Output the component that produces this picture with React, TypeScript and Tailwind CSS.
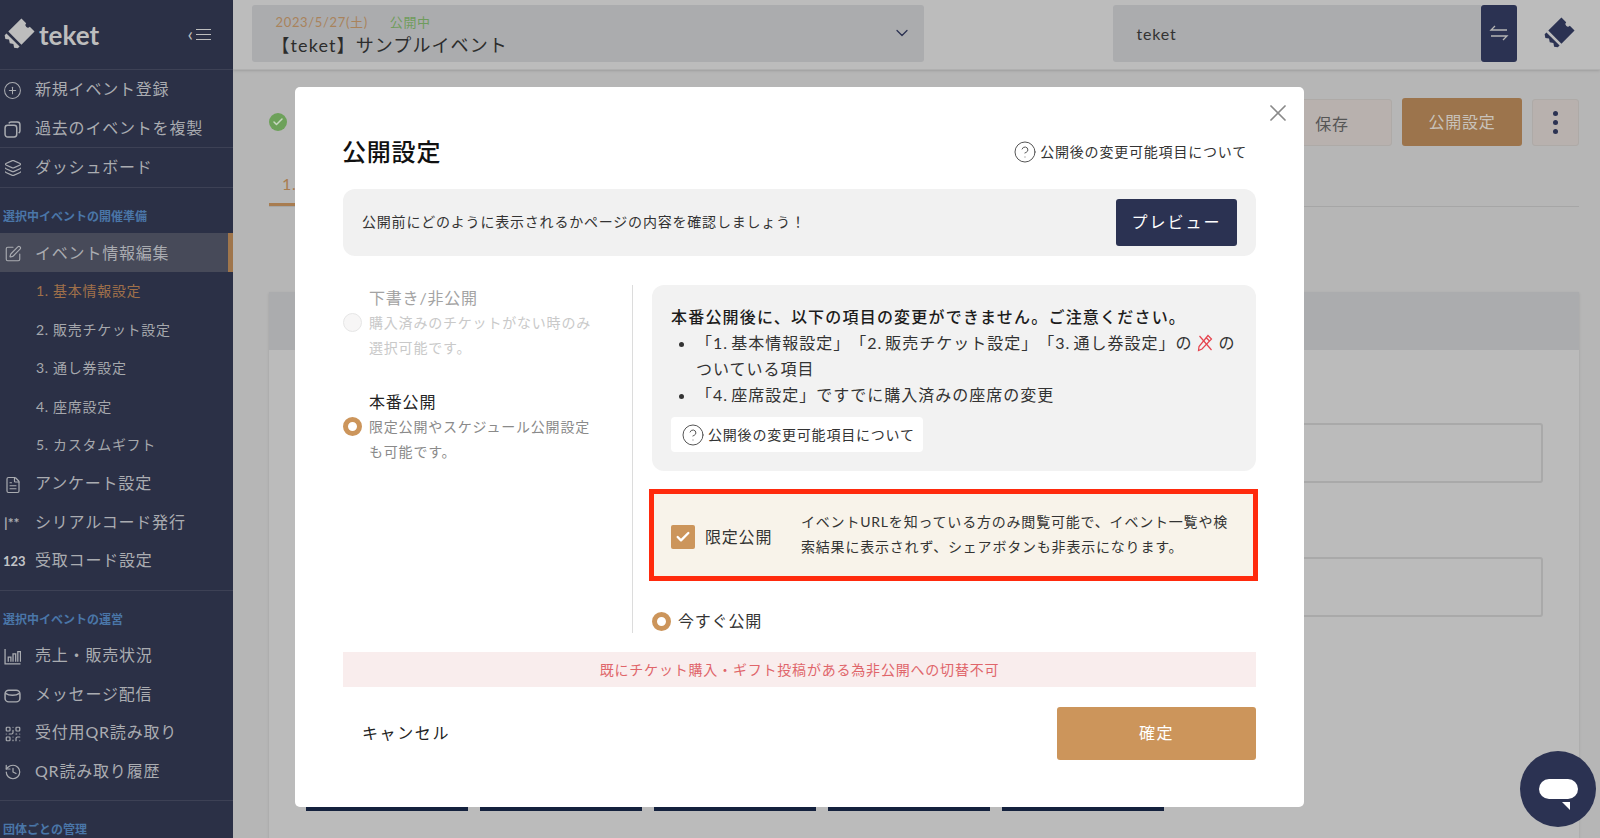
import React from 'react'
import { ChevronDown, CirclePlus, Layers, SquarePen, FileText, QrCode, History, X, Check, CircleHelp } from 'lucide-react'

const TicketLogo = ({ className }: { className?: string }) => (
  <svg viewBox="-16 -16 32 32" className={className} fill="currentColor">
    <g transform="rotate(-45)">
      <path d="M-5 -9H13V-2.500A2.500 2.500 0 0 0 13 2.500V9H-5Z" />
      <path d="M-7.500 -9V9H-10L-12 6L-10 3L-12 0L-10 -3L-12 -6L-10 -9Z" />
    </g>
  </svg>
)

const CopyIcon = () => (
  <svg viewBox="0 0 16 16" className="w-[17px] h-[17px]" fill="none" stroke="currentColor" strokeWidth="1.4">
    <rect x="1" y="4" width="11" height="11" rx="2.500" />
    <path d="M4.500 2.200C5 1.400 5.600 1 6.500 1H12.500C14 1 15 2 15 3.500V9.500C15 10.400 14.600 11 13.800 11.500" />
  </svg>
)

const MailIcon = () => (
  <svg viewBox="0 0 16 16" className="w-[17px] h-[17px]" fill="none" stroke="currentColor" strokeWidth="1.4">
    <rect x="1" y="3" width="14" height="11" rx="3.500" />
    <path d="M1.500 6C5 8.500 11 8.500 14.500 6" />
  </svg>
)

const BarsIcon = () => (
  <svg viewBox="0 0 16 16" className="w-[17px] h-[17px]" fill="none" stroke="currentColor" strokeWidth="1.200">
    <path d="M1 1V15H15.500" />
    <path d="M4 13V8.500H6.500V13" />
    <path d="M8.500 13V5.500H11V13" />
    <path d="M13 13V3.500H15.500V13" />
  </svg>
)

const SwapIcon = () => (
  <svg viewBox="0 0 20 20" className="w-5 h-5" fill="none" stroke="currentColor" strokeWidth="1.300">
    <path d="M18 7H2L6 3" />
    <path d="M2 13H18L14 17" />
  </svg>
)

const NoEditIcon = () => (
  <svg viewBox="0 0 16 18" className="inline-block w-[16px] h-[18px] mx-[5px] align-[-3px] text-[#e5434d]" fill="none" stroke="currentColor" strokeWidth="1.200">
    <path d="M11 1.500L14.500 5L5 15L1.500 16.500L2 12.500Z" />
    <path d="M2.500 2L14.500 16" />
    <path d="M9 3.500L12.500 7" />
  </svg>
)

const Radio = ({ on }: { on?: boolean }) => (
  <span className={on
    ? 'shrink-0 w-[19px] h-[19px] rounded-full border-[5px] border-[#cc955b] bg-white'
    : 'shrink-0 w-[19px] h-[19px] rounded-full border border-[#e6e6e6] bg-[#f7f6f6]'} />
)

const NavItem = ({ icon, label }: { icon: React.ReactNode; label: string }) => (
  <div className="h-[38.4px] flex items-center text-[#aaacb1] text-base tracking-wider">
    <span className="w-[35px] pl-[4px] pt-[3px] flex items-center shrink-0">{icon}</span>
    <span>{label}</span>
  </div>
)

const SectionLabel = ({ label }: { label: string }) => (
  <div className="h-[45px] flex items-end pb-[8px] pl-[3px] text-xs font-bold text-[#4a76a8]">{label}</div>
)

const Sidebar = () => (
  <aside className="w-[233px] shrink-0 h-full bg-[#2b3046] overflow-hidden">
    <div className="h-[70px] border-b border-[#3d4155] flex items-center pl-[2px] pr-[22px] text-[#bdbdbd]">
      <TicketLogo className="w-[33px] h-[33px]" />
      <span className="ml-[4px] pt-[2px] text-[26px] font-bold tracking-normal">teket</span>
      <span className="ml-auto flex items-center gap-[3px]">
        <span className="text-[20px] leading-none pb-[3px]">‹</span>
        <span className="flex flex-col gap-[4px] w-[15px]">
          <span className="h-px bg-[#bdbdbd]" />
          <span className="h-px bg-[#bdbdbd]" />
          <span className="h-px bg-[#bdbdbd]" />
        </span>
      </span>
    </div>
    <div className="border-b border-[#3d4155]">
      <NavItem icon={<CirclePlus className="w-[19px] h-[19px] -ml-[1px]" strokeWidth={1.3} />} label="新規イベント登録" />
      <NavItem icon={<CopyIcon />} label="過去のイベントを複製" />
    </div>
    <div className="border-b border-[#3d4155] pb-px">
      <NavItem icon={<Layers className="w-[18px] h-[18px]" strokeWidth={1.5} />} label="ダッシュボード" />
    </div>
    <SectionLabel label="選択中イベントの開催準備" />
    <div className="h-[39px] bg-[#474a59] border-r-[5px] border-[#a0764c] flex items-center text-[#aaacb1] text-base tracking-wider">
      <span className="w-[35px] pl-[4px] pt-[3px] shrink-0"><SquarePen className="w-[18px] h-[18px]" strokeWidth={1.5} /></span>
      <span>イベント情報編集</span>
    </div>
    <div className="text-sm tracking-wider text-[#a6a8ad]">
      <div className="h-[38.4px] pl-[36px] flex items-center text-[#a0704a]">1. 基本情報設定</div>
      <div className="h-[38.4px] pl-[36px] flex items-center">2. 販売チケット設定</div>
      <div className="h-[38.4px] pl-[36px] flex items-center">3. 通し券設定</div>
      <div className="h-[38.4px] pl-[36px] flex items-center">4. 座席設定</div>
      <div className="h-[38.4px] pl-[36px] flex items-center">5. カスタムギフト</div>
    </div>
    <div className="border-b border-[#3d4155] pb-[11px]">
      <NavItem icon={<FileText className="w-[18px] h-[18px]" strokeWidth={1.6} />} label="アンケート設定" />
      <NavItem icon={<span className="text-sm font-bold tracking-normal">|**</span>} label="シリアルコード発行" />
      <NavItem icon={<span className="-ml-[1px] text-[13px] font-bold tracking-normal text-[#c2c4c8]">123</span>} label="受取コード設定" />
    </div>
    <SectionLabel label="選択中イベントの運営" />
    <div className="border-b border-[#3d4155] pb-[10px]">
      <NavItem icon={<BarsIcon />} label="売上・販売状況" />
      <NavItem icon={<MailIcon />} label="メッセージ配信" />
      <NavItem icon={<QrCode className="w-[18px] h-[18px]" strokeWidth={1.6} />} label="受付用QR読み取り" />
      <NavItem icon={<History className="w-[18px] h-[18px]" strokeWidth={1.6} />} label="QR読み取り履歴" />
    </div>
    <SectionLabel label="団体ごとの管理" />
  </aside>
)

const Header = () => (
  <header className="h-[70px] shrink-0 bg-[#bcbcbc] border-b border-[#b0b0b0] shadow-sm flex items-center pb-[3px] pl-[18.5px]">
    <div className="w-[672px] h-[57px] rounded-[3px] bg-[#abacae] flex items-center pl-[24px] pr-[12px]">
      <div className="flex-1 pt-[3px]">
        <div className="flex gap-[22px] text-[13px] leading-[20px] tracking-wider">
          <span className="text-[#a9835c]">2023/5/27(土)</span>
          <span className="text-[#6f9c5c]">公開中</span>
        </div>
        <div className="text-lg leading-[26px] text-[#2c2c2c] tracking-[1.100px] -ml-[4px]">【teket】サンプルイベント</div>
      </div>
      <ChevronDown className="w-5 h-5 text-[#2b3252]" strokeWidth={1.5} />
    </div>
    <div className="ml-[189px] w-[368px] h-[57px] pt-[2px] rounded-l-[3px] bg-[#abacae] flex items-center pl-[24px] text-base text-[#333] tracking-wider">teket</div>
    <div className="w-[36px] h-[57px] rounded-[3px] bg-[#2b3252] text-[#b5b5b5] flex items-center justify-center"><SwapIcon /></div>
    <TicketLogo className="ml-[25px] w-[33px] h-[33px] text-[#2b3252]" />
  </header>
)

const Main = () => (
  <main className="flex-1 flex flex-col min-w-0 bg-[#b6b6b6]">
    <Header />
    <div className="flex-1 pl-[36px] pr-[21px] pt-[28px] overflow-hidden">
      <div className="flex items-center gap-[10px] h-[48px]">
        <span className="w-[18px] h-[18px] rounded-full bg-[#6da15a] flex items-center justify-center text-[#c9d8c2]">
          <Check className="w-3 h-3" strokeWidth={3} />
        </span>
        <span className="ml-auto w-[120px] h-[47px] pt-[3px] rounded-[3px] bg-[#b8b1ae] border border-[#aeaaa7] flex items-center justify-center text-base text-[#555] tracking-wider">保存</span>
        <span className="w-[120px] h-[48px] rounded-[3px] bg-[#9c744c] flex items-center justify-center text-base text-[#c8c2ba] tracking-wider">公開設定</span>
        <span className="w-[47px] h-[47px] rounded-[3px] bg-[#b8b1ae] border border-[#aeaaa7] flex flex-col items-center justify-center gap-[4px]">
          <span className="w-[5px] h-[5px] rounded-full bg-[#2b3252]" />
          <span className="w-[5px] h-[5px] rounded-full bg-[#2b3252]" />
          <span className="w-[5px] h-[5px] rounded-full bg-[#2b3252]" />
        </span>
      </div>
      <div className="mt-[12px] h-[49px] border-b border-[#a6a6a6] flex">
        <span className="px-[13px] pt-[14px] border-b-[3px] border-[#a87c50] text-base text-[#a87c50] tracking-wider">1. 基本情報設定</span>
      </div>
      <div className="mt-[85px] h-[600px] bg-[#bbbbbb] shadow-sm">
        <div className="h-[58px] bg-[#abacae]" />
        <div className="px-[36px] pt-[73px]">
          <div className="h-[60px] rounded-[3px] border-2 border-[#a9a9a9]" />
          <div className="mt-[74px] h-[60px] rounded-[3px] border-2 border-[#a9a9a9]" />
          <div className="mt-[190px] ml-[1px] flex gap-[12px]">
            {[0, 1, 2, 3, 4].map((i) => (
              <span key={i} className="w-[162px] h-[4px] bg-[#14213d]" />
            ))}
          </div>
        </div>
      </div>
    </div>
  </main>
)

const PublishModal = () => (
  <div className="absolute left-[295px] top-[87px] w-[1009px] h-[720px] rounded-[5px] bg-white px-[48px] pt-[47px] text-[#333] tracking-wider">
    <X className="absolute right-[12px] top-[12px] w-[28px] h-[28px] text-[#8a8a8a]" strokeWidth={1.500} />
    <div className="h-[36px] flex items-center justify-between pr-[9px]">
      <h2 className="text-2xl font-medium text-[#111] tracking-[0.800px] -ml-[1px]">公開設定</h2>
      <div className="flex items-center gap-[3px] text-sm">
        <CircleHelp className="w-[24px] h-[24px] text-[#555]" strokeWidth={1} />
        <span>公開後の変更可能項目について</span>
      </div>
    </div>
    <div className="mt-[19px] h-[67px] rounded-xl bg-[#f1f1f1] flex items-center justify-between pl-[19px] pr-[19px] text-sm">
      <span className="pb-[2px]">公開前にどのように表示されるかページの内容を確認しましょう！</span>
      <button className="w-[121px] h-[47px] pb-[2px] rounded-[3px] bg-[#2b3252] text-white text-base tracking-[2px]">プレビュー</button>
    </div>

    <div className="mt-[29px] h-[348px] flex">
      <div className="w-[290px] shrink-0 border-r border-[#dcdcdc]">
        <div className="flex items-center gap-[7px]">
          <Radio />
          <div>
            <div className="text-base leading-[25px] text-[#a3a3a3]">下書き/非公開</div>
            <p className="w-[228px] text-sm leading-[25px] text-[#c9c9c9]">購入済みのチケットがない時のみ選択可能です。</p>
          </div>
        </div>
        <div className="mt-[29px] flex items-center gap-[7px]">
          <Radio on />
          <div>
            <div className="text-base leading-[25px] text-[#222]">本番公開</div>
            <p className="w-[228px] text-sm leading-[25px] text-[#8a8a8a]">限定公開やスケジュール公開設定も可能です。</p>
          </div>
        </div>
      </div>

      <div className="flex-1 pl-[19px]">
        <div className="h-[186px] rounded-xl bg-[#f2f2f2] pl-[19px] pr-[15px] pt-[19px]">
          <p className="text-base font-medium leading-[26px] text-[#1c1c1c] tracking-[1.200px] whitespace-nowrap">本番公開後に、以下の項目の変更ができません。ご注意ください。</p>
          <ul className="list-disc pl-[25px] text-base leading-[26px] tracking-[1px] [word-spacing:-2px]">
            <li>「1. 基本情報設定」「2. 販売チケット設定」「3. 通し券設定」の<NoEditIcon />のついている項目</li>
            <li>「4. 座席設定」ですでに購入済みの座席の変更</li>
          </ul>
          <div className="mt-[9px] w-[252px] h-[35px] rounded-[4px] bg-white flex items-center gap-[3px] pl-[10px] text-sm">
            <CircleHelp className="w-[24px] h-[24px] text-[#555]" strokeWidth={1} />
            <span>公開後の変更可能項目について</span>
          </div>
        </div>
        <div className="mt-[18px] -ml-[3px] -mr-[2px] h-[92px] border-[5px] border-[#ff2a0d] bg-[#f8f3ea] flex items-center pl-[17px] pr-[14px]">
          <span className="mt-[4px] w-[24px] h-[24px] rounded-[2px] bg-[#cc955b] flex items-center justify-center text-white shrink-0">
            <Check className="w-[16px] h-[16px]" strokeWidth={3.500} />
          </span>
          <span className="mt-[4px] ml-[10px] w-[96px] shrink-0 text-base">限定公開</span>
          <p className="mb-[2px] text-sm leading-[25px]">イベントURLを知っている方のみ閲覧可能で、イベント一覧や検索結果に表示されず、シェアボタンも非表示になります。</p>
        </div>
        <div className="mt-[28px] flex items-center gap-[7px] text-base">
          <Radio on />
          <span>今すぐ公開</span>
        </div>
      </div>
    </div>

    <div className="mt-[19px] h-[35px] bg-[#f9eded] flex items-center justify-center text-sm text-[#e0656a]">既にチケット購入・ギフト投稿がある為非公開への切替不可</div>
    <div className="mt-[20px] flex items-center justify-between pl-[19px]">
      <span className="pb-[2px] text-base text-[#222] tracking-[1.600px]">キャンセル</span>
      <button className="w-[199px] h-[53px] pb-[2px] rounded-[3px] bg-[#cc955b] text-white text-base tracking-[1.500px]">確定</button>
    </div>
  </div>
)

const ChatButton = () => (
  <div className="absolute left-[1520px] top-[751px] w-[76px] h-[76px] rounded-full bg-[#2b3252] flex items-center justify-center">
    <span className="relative w-[39px] h-[20px] rounded-full bg-white">
      <svg viewBox="0 0 8 8" className="absolute left-[23px] top-[23px] w-[8px] h-[8px]" fill="white">
        <path d="M0 0H8V8Z" />
      </svg>
    </span>
  </div>
)

export default function App() {
  return (
    <div className="relative h-screen w-full flex overflow-hidden font-[Lato,'Noto_Sans_CJK_JP',sans-serif] [text-spacing-trim:space-all]">
      <Sidebar />
      <Main />
      <PublishModal />
      <ChatButton />
    </div>
  )
}
